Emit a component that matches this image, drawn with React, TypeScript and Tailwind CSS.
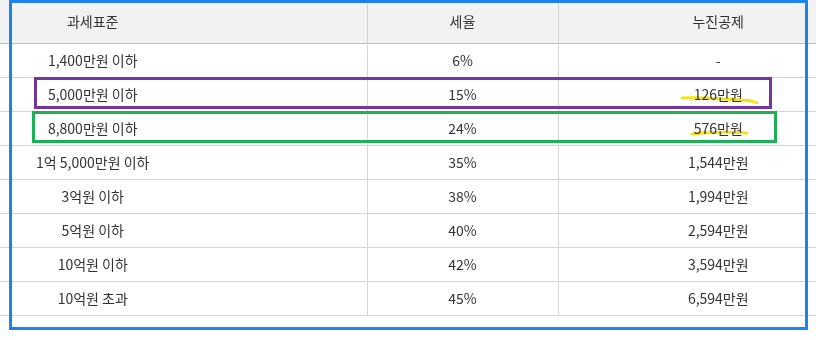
import React from "react";

type Row = { base: string; rate: string; deduction: string };

const rows: Row[] = [
  { base: "1,400만원 이하", rate: "6%", deduction: "-" },
  { base: "5,000만원 이하", rate: "15%", deduction: "126만원" },
  { base: "8,800만원 이하", rate: "24%", deduction: "576만원" },
  { base: "1억 5,000만원 이하", rate: "35%", deduction: "1,544만원" },
  { base: "3억원 이하", rate: "38%", deduction: "1,994만원" },
  { base: "5억원 이하", rate: "40%", deduction: "2,594만원" },
  { base: "10억원 이하", rate: "42%", deduction: "3,594만원" },
  { base: "10억원 초과", rate: "45%", deduction: "6,594만원" },
];

const font = { fontFamily: '"Malgun Gothic", "Noto Sans CJK KR", "Noto Sans", sans-serif' };

const App: React.FC = () => {
  return (
    <div className="relative w-[816px] h-[340px] overflow-hidden bg-white" style={font}>
      {/* TAX TABLE (wider than the view, cut on both sides) */}
      <table className="ml-[-181px] w-[1059px] table-fixed border-collapse text-[14px] text-[#333333]">
        <colgroup>
          <col className="w-[548px]" />
          <col className="w-[191px]" />
          <col className="w-[320px]" />
        </colgroup>
        <thead>
          <tr className="h-[43px] bg-[#f2f2f2] border-b border-[#bcbcbc]">
            <th className="font-normal text-center">과세표준</th>
            <th className="font-normal text-center border-l border-[#d6d6d6]">세율</th>
            <th className="font-normal text-center border-l border-[#d6d6d6]">누진공제</th>
          </tr>
        </thead>
        <tbody>
          {rows.map((r) => (
            <tr key={r.base} className="h-[34px] border-b border-[#d4d4d4]">
              <td className="text-center p-0">{r.base}</td>
              <td className="text-center p-0 border-l border-[#d6d6d6]">{r.rate}</td>
              <td className="text-center p-0 border-l border-[#d6d6d6]">{r.deduction}</td>
            </tr>
          ))}
        </tbody>
      </table>

      {/* HIGHLIGHTER STROKES (multiply so the text stays on top) */}
      <svg className="absolute left-0 top-0 pointer-events-none mix-blend-multiply" width="816" height="340">
        <path
          d="M682 98 C700 97 720 99 740 100 C748 100 753 101 757 103"
          stroke="#f5e31a"
          strokeWidth="3"
          strokeLinecap="round"
          fill="none"
        />
        <path
          d="M692 134 C708 132 728 132 747 133"
          stroke="#f5e31a"
          strokeWidth="3"
          strokeLinecap="round"
          fill="none"
        />
      </svg>

      {/* MARKUP BOXES */}
      <div className="absolute left-[9px] top-0 w-[799px] h-[330px] border-[3px] border-[#1a84ec]" />
      <div className="absolute left-[34px] top-[77px] w-[738px] h-[32px] border-[3px] border-[#7236a0]" />
      <div className="absolute left-[32px] top-[111px] w-[745px] h-[32px] border-[3px] border-[#1faf57]" />
    </div>
  );
};

export default App;
